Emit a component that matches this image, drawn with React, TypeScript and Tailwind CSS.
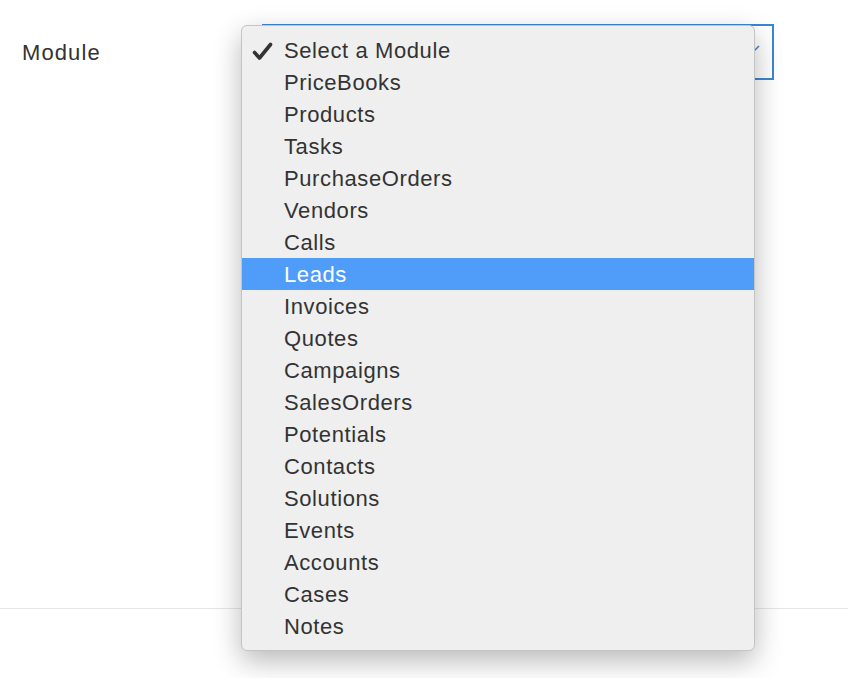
import React from "react";

const items = [
  "PriceBooks",
  "Products",
  "Tasks",
  "PurchaseOrders",
  "Vendors",
  "Calls",
  "Leads",
  "Invoices",
  "Quotes",
  "Campaigns",
  "SalesOrders",
  "Potentials",
  "Contacts",
  "Solutions",
  "Events",
  "Accounts",
  "Cases",
  "Notes",
];

export default function App() {
  return (
    <div
      className="relative w-[848px] h-[678px] bg-white overflow-hidden"
      style={{ fontFamily: '"Liberation Sans", Arial, sans-serif' }}
    >
      <div className="flex items-start pt-[24px]">
        <div className="w-[262px] pl-[22px] h-[56px] flex items-center text-[22px] text-[#333] tracking-[1.1px]">
          Module
        </div>
        <div className="relative w-[512px] h-[56px] border-2 border-[#3a86d6]">
          <svg
            className="absolute right-[12px] top-[18px]"
            width="10"
            height="8"
            viewBox="0 0 10 8"
          >
            <path d="M1 2 L5 6 L9 2" stroke="#3a86d6" strokeWidth="1.5" fill="none" />
          </svg>
        </div>
      </div>
      <div className="mt-[528px] h-px bg-[#e6e6e6]" />

      <div className="absolute left-[241px] top-[25px] w-[514px] py-[8px] rounded-[6px] bg-[#efefef] border border-[#c4c4c4] shadow-[0_10px_28px_rgba(0,0,0,0.28)] tracking-[0.6px]">
        <div className="relative h-[32px] flex items-center pl-[42px] text-[22px] text-[#333]">
          <svg
            className="absolute left-[10px] top-[8px]"
            width="22"
            height="20"
            viewBox="0 0 22 20"
          >
            <path
              d="M2.5 10.5 L7.5 16 L18.5 2.5"
              stroke="#333"
              strokeWidth="3.6"
              fill="none"
              strokeLinecap="round"
              strokeLinejoin="round"
            />
          </svg>
          Select a Module
        </div>
        {items.map((it) => (
          <div
            key={it}
            className={
              it === "Leads"
                ? "h-[32px] flex items-center pl-[42px] text-[22px] text-white bg-[#4f9cf9]"
                : "h-[32px] flex items-center pl-[42px] text-[22px] text-[#333]"
            }
          >
            {it}
          </div>
        ))}
      </div>
    </div>
  );
}
